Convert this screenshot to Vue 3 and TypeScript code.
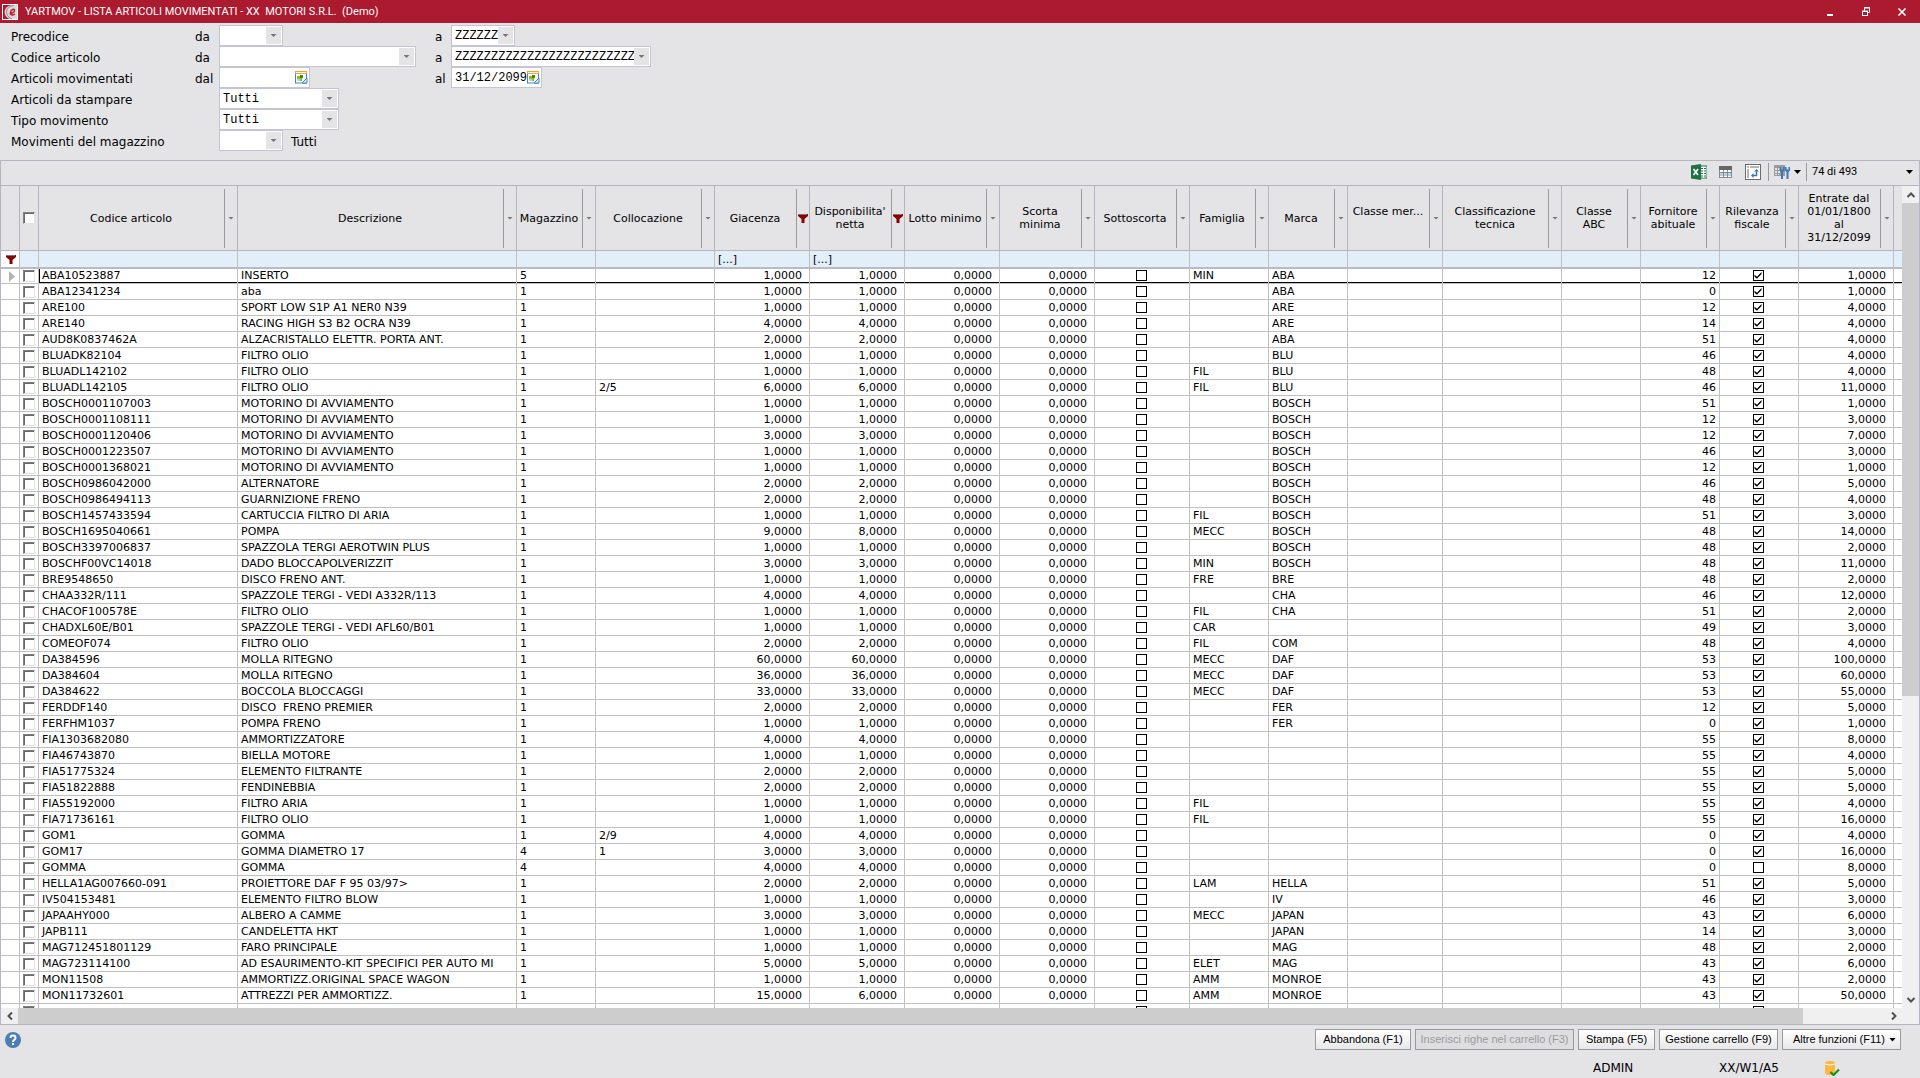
<script setup lang="ts">
import { ref } from 'vue'

interface Column {
  key: string
  title: string
  width: number
  align?: 'left' | 'right' | 'center'
  filtered?: boolean
}

interface Article {
  code: string
  desc: string
  mag: string
  coll: string
  giac: string
  disp: string
  fam: string
  marca: string
  forn: string
  fiscal: boolean
  entrate: string
}

const columns: Column[] = [
  { key: 'code', title: 'Codice articolo', width: 199 },
  { key: 'desc', title: 'Descrizione', width: 279 },
  { key: 'mag', title: 'Magazzino', width: 79 },
  { key: 'coll', title: 'Collocazione', width: 119 },
  { key: 'giac', title: 'Giacenza', width: 95, align: 'right', filtered: true },
  { key: 'disp', title: "Disponibilita'\nnetta", width: 95, align: 'right', filtered: true },
  { key: 'lotto', title: 'Lotto minimo', width: 95, align: 'right' },
  { key: 'scorta', title: 'Scorta\nminima', width: 95, align: 'right' },
  { key: 'sotto', title: 'Sottoscorta', width: 95, align: 'center' },
  { key: 'fam', title: 'Famiglia', width: 79 },
  { key: 'marca', title: 'Marca', width: 79 },
  { key: 'merc', title: 'Classe mer...\n\u00a0', width: 95 },
  { key: 'tecnica', title: 'Classificazione\ntecnica', width: 119 },
  { key: 'abc', title: 'Classe\nABC', width: 79 },
  { key: 'forn', title: 'Fornitore\nabituale', width: 79, align: 'right' },
  { key: 'fiscal', title: 'Rilevanza\nfiscale', width: 79, align: 'center' },
  { key: 'entrate', title: 'Entrate dal\n01/01/1800\nal\n31/12/2099', width: 95, align: 'right' },
]

// code | description | warehouse | location | stock | available | family | brand | supplier | received
const source = `ABA10523887|INSERTO|5||1|1|MIN|ABA|12|1
ABA12341234|aba|1||1|1||ABA|0|1
ARE100|SPORT LOW S1P A1 NER0 N39|1||1|1||ARE|12|4
ARE140|RACING HIGH S3 B2 OCRA N39|1||4|4||ARE|14|4
AUD8K0837462A|ALZACRISTALLO ELETTR. PORTA ANT.|1||2|2||ABA|51|4
BLUADK82104|FILTRO OLIO|1||1|1||BLU|46|4
BLUADL142102|FILTRO OLIO|1||1|1|FIL|BLU|48|4
BLUADL142105|FILTRO OLIO|1|2/5|6|6|FIL|BLU|46|11
BOSCH0001107003|MOTORINO DI AVVIAMENTO|1||1|1||BOSCH|51|1
BOSCH0001108111|MOTORINO DI AVVIAMENTO|1||1|1||BOSCH|12|3
BOSCH0001120406|MOTORINO DI AVVIAMENTO|1||3|3||BOSCH|12|7
BOSCH0001223507|MOTORINO DI AVVIAMENTO|1||1|1||BOSCH|46|3
BOSCH0001368021|MOTORINO DI AVVIAMENTO|1||1|1||BOSCH|12|1
BOSCH0986042000|ALTERNATORE|1||2|2||BOSCH|46|5
BOSCH0986494113|GUARNIZIONE FRENO|1||2|2||BOSCH|48|4
BOSCH1457433594|CARTUCCIA FILTRO DI ARIA|1||1|1|FIL|BOSCH|51|3
BOSCH1695040661|POMPA|1||9|8|MECC|BOSCH|48|14
BOSCH3397006837|SPAZZOLA TERGI AEROTWIN PLUS|1||1|1||BOSCH|48|2
BOSCHF00VC14018|DADO BLOCCAPOLVERIZZIT|1||3|3|MIN|BOSCH|48|11
BRE9548650|DISCO FRENO ANT.|1||1|1|FRE|BRE|48|2
CHAA332R/111|SPAZZOLE TERGI - VEDI A332R/113|1||4|4||CHA|46|12
CHACOF100578E|FILTRO OLIO|1||1|1|FIL|CHA|51|2
CHADXL60E/B01|SPAZZOLE TERGI - VEDI AFL60/B01|1||1|1|CAR||49|3
COMEOF074|FILTRO OLIO|1||2|2|FIL|COM|48|4
DA384596|MOLLA RITEGNO|1||60|60|MECC|DAF|53|100
DA384604|MOLLA RITEGNO|1||36|36|MECC|DAF|53|60
DA384622|BOCCOLA BLOCCAGGI|1||33|33|MECC|DAF|53|55
FERDDF140|DISCO  FRENO PREMIER|1||2|2||FER|12|5
FERFHM1037|POMPA FRENO|1||1|1||FER|0|1
FIA1303682080|AMMORTIZZATORE|1||4|4|||55|8
FIA46743870|BIELLA MOTORE|1||1|1|||55|4
FIA51775324|ELEMENTO FILTRANTE|1||2|2|||55|5
FIA51822888|FENDINEBBIA|1||2|2|||55|5
FIA55192000|FILTRO ARIA|1||1|1|FIL||55|4
FIA71736161|FILTRO OLIO|1||1|1|FIL||55|16
GOM1|GOMMA|1|2/9|4|4|||0|4
GOM17|GOMMA DIAMETRO 17|4|1|3|3|||0|16
GOMMA|GOMMA|4||4|4|||0|8
HELLA1AG007660-091|PROIETTORE DAF F 95 03/97>|1||2|2|LAM|HELLA|51|5
IV504153481|ELEMENTO FILTRO BLOW|1||1|1||IV|46|3
JAPAAHY000|ALBERO A CAMME|1||3|3|MECC|JAPAN|43|6
JAPB111|CANDELETTA HKT|1||1|1||JAPAN|14|3
MAG712451801129|FARO PRINCIPALE|1||1|1||MAG|48|2
MAG723114100|AD ESAURIMENTO-KIT SPECIFICI PER AUTO MI|1||5|5|ELET|MAG|43|6
MON11508|AMMORTIZZ.ORIGINAL SPACE WAGON|1||1|1|AMM|MONROE|43|2
MON11732601|ATTREZZI PER AMMORTIZZ.|1||15|6|AMM|MONROE|43|50`

const qty = (n: string) => `${n},0000`

const articles: Article[] = source.split('\n').map((line) => {
  const [code, desc, mag, coll, giac, disp, fam, marca, forn, entrate] = line.split('|')
  return {
    code, desc, mag, coll, fam, marca, forn,
    giac: qty(giac),
    disp: qty(disp),
    entrate: qty(entrate),
    fiscal: code !== 'GOMMA',
  }
})

const selected = ref<string[]>([])
const precodeFrom = ref('')
const precodeTo = ref('ZZZZZZ')
const codeFrom = ref('')
const codeTo = ref('Z'.repeat(25))
const dateFrom = ref('')
const dateTo = ref('31/12/2099')
const warehouse = ref('')
</script>

<template>
  <div class="window">
    <header class="titlebar">
      <svg class="logo" viewBox="0 0 16 16" aria-hidden="true">
        <rect width="16" height="16" fill="#fff" />
        <rect x="1" y="1" width="14" height="14" fill="#c4122b" />
        <path d="M15 1H10C4 2 1.500 6 3 10.500C4 13 6 14.500 8 15H15z" fill="#d9d9d9" />
        <path d="M12 1.500C6 2 3.500 6 5 10.500C6 12.500 7.500 14 10 15" fill="none" stroke="#8c8c8c" />
        <path d="M7.500 9.500C10 10 13 8 12.500 6C12 4.500 8.500 5.500 8.500 8.500C8.500 11.500 11 11.500 13 10" fill="none" stroke="#c4122b" stroke-width="1.500" />
      </svg>
      <h1>YARTMOV - LISTA ARTICOLI MOVIMENTATI - XX&nbsp; MOTORI S.R.L.&nbsp; (Demo)</h1>
      <div class="window-buttons">
        <button type="button" aria-label="Riduci a icona">
          <svg viewBox="0 0 12 12"><rect x="3" y="8" width="6" height="2" fill="#fff" /></svg>
        </button>
        <button type="button" aria-label="Ripristina">
          <svg viewBox="0 0 12 12" fill="none" stroke="#fff">
            <path d="M4.500 4.500V1.500H9.500V6.500H7" /><path d="M4 2H10" /><rect x="2.500" y="5.500" width="5" height="4" /><path d="M2 5H8" />
          </svg>
        </button>
        <button type="button" aria-label="Chiudi">
          <svg viewBox="0 0 12 12"><path d="M2.500 2.500L9.500 9.500M9.500 2.500L2.500 9.500" stroke="#fff" stroke-width="1.600" /></svg>
        </button>
      </div>
    </header>

    <form class="filters" @submit.prevent>
      <span class="name">Precodice</span>
      <label for="pre-from">da</label>
      <div class="field w-short"><input id="pre-from" v-model="precodeFrom" /><button type="button" class="drop" aria-label="Apri elenco"><i class="tri"></i></button></div>
      <label for="pre-to" class="to">a</label>
      <div class="field w-short"><input id="pre-to" v-model="precodeTo" /><button type="button" class="drop" aria-label="Apri elenco"><i class="tri"></i></button></div>

      <span class="name">Codice articolo</span>
      <label for="cod-from">da</label>
      <div class="field w-long"><input id="cod-from" v-model="codeFrom" /><button type="button" class="drop" aria-label="Apri elenco"><i class="tri"></i></button></div>
      <label for="cod-to" class="to">a</label>
      <div class="field w-full"><input id="cod-to" v-model="codeTo" /><button type="button" class="drop" aria-label="Apri elenco"><i class="tri"></i></button></div>

      <span class="name">Articoli movimentati</span>
      <label for="date-from">dal</label>
      <div class="field w-date">
        <input id="date-from" v-model="dateFrom" />
        <button type="button" class="calendar" aria-label="Scegli data">
          <svg viewBox="0 0 13 13"><rect x=".5" y="1" width="11" height="11" fill="#fff" stroke="#3f87bd" /><path d="M0 1.500H12" stroke="#ff9d2e" stroke-width="3" /><path d="M1 1.500H11" stroke="#fff" /><path d="M2 5h5v5H2z" fill="#8cbf1f" /><path d="M5 4h3v3H5z" fill="#3c8a12" /><path d="M2 8h3v2H2z" fill="#b9d6ee" /><path d="M7 12L12 7V12z" fill="#dbe9f5" stroke="#3f87bd" /></svg>
        </button>
      </div>
      <label for="date-to" class="to">al</label>
      <div class="field w-date">
        <input id="date-to" v-model="dateTo" />
        <button type="button" class="calendar" aria-label="Scegli data">
          <svg viewBox="0 0 13 13"><rect x=".5" y="1" width="11" height="11" fill="#fff" stroke="#3f87bd" /><path d="M0 1.500H12" stroke="#ff9d2e" stroke-width="3" /><path d="M1 1.500H11" stroke="#fff" /><path d="M2 5h5v5H2z" fill="#8cbf1f" /><path d="M5 4h3v3H5z" fill="#3c8a12" /><path d="M2 8h3v2H2z" fill="#b9d6ee" /><path d="M7 12L12 7V12z" fill="#dbe9f5" stroke="#3f87bd" /></svg>
        </button>
      </div>

      <label for="print" class="name wide">Articoli da stampare</label>
      <div class="field w-select last"><select id="print"><option>Tutti</option></select><span class="drop"><i class="tri"></i></span></div>

      <label for="kind" class="name wide">Tipo movimento</label>
      <div class="field w-select last"><select id="kind"><option>Tutti</option></select><span class="drop"><i class="tri"></i></span></div>

      <label for="store" class="name wide">Movimenti del magazzino</label>
      <div class="last store">
        <div class="field w-short"><input id="store" v-model="warehouse" /><button type="button" class="drop" aria-label="Apri elenco"><i class="tri"></i></button></div>
        <span>Tutti</span>
      </div>
    </form>

    <main class="grid-panel">
      <div class="toolbar">
        <button type="button" class="tool" aria-label="Esporta in Excel">
          <svg viewBox="0 0 16 16"><rect x="9" y="2" width="7" height="12" fill="#fff" stroke="#1e7145" /><path d="M10 4.500h5M10 7h5M10 9.500h5M10 12h5" stroke="#1e7145" /><path d="M12.500 3v11" stroke="#fff" /><path d="M0 1.500L10 0V16L0 14.500z" fill="#1e7145" /><path d="M2.500 5L7 11M7 5L2.500 11" stroke="#fff" stroke-width="1.600" /></svg>
        </button>
        <button type="button" class="tool" aria-label="Vista griglia">
          <svg viewBox="0 0 16 16"><rect x="1" y="2" width="13" height="12" fill="#8a8a8a" /><rect x="1" y="2" width="13" height="4" fill="#666" /><path d="M2 6h3v2H2zM6 6h3v2H6zM10 6h3v2h-3zM2 11.500h3v1.500H2zM6 11.500h3v1.500H6zM10 11.500h3v1.500h-3z" fill="#fff" /><path d="M2 9h3v2H2zM6 9h3v2H6zM10 9h3v2h-3z" fill="#a9d5f0" /></svg>
        </button>
        <button type="button" class="tool end" aria-label="Vista pivot">
          <svg viewBox="0 0 16 16"><rect x=".5" y=".5" width="15" height="15" fill="#fff" stroke="#6b6b6b" /><path d="M2 2h2v2H2zM5 2h9v2H5zM2 5h2v9H2z" fill="#b5b5b5" /><path d="M8 11.500H11.500V7" fill="none" stroke="#3a78b5" stroke-width="1.500" /><path d="M9 7.500L11.500 5L14 7.500zM8.500 9V14L6 11.500z" fill="#3a78b5" /></svg>
        </button>
        <span class="rule"></span>
        <button type="button" class="tool menu" aria-label="Strumenti">
          <svg viewBox="0 0 16 16"><path d="M0 1h11v11H0z" fill="#9a9a9a" /><path d="M1 4h2v2H1zM4 4h2v2H4zM1 7h2v2H1zM4 7h2v2H4zM1 10h2v1H1zM4 10h1v1H4z" fill="#e4e4e6" /><path d="M5.500 3v3.500L7 8v7h2V8l1.500-1.500V3H9v2.500H7V3zM11 3v3.500L12.500 8v7h2V8L16 6.500V3h-1.500v2.500h-2V3z" fill="#3a78b5" /></svg>
          <i class="tri dark"></i>
        </button>
        <span class="rule"></span>
        <button type="button" class="count"><span>74 di 493</span><i class="tri dark"></i></button>
      </div>

      <div class="sheet">
        <div class="viewport">
          <table>
            <colgroup>
              <col class="c-mark" /><col class="c-mark" />
              <col v-for="c in columns" :key="c.key" :style="{ width: c.width + 'px' }" />
              <col />
            </colgroup>
            <thead>
              <tr class="titles">
                <th></th>
                <th><input type="checkbox" class="tick" aria-label="Seleziona tutti" /></th>
                <th v-for="c in columns" :key="c.key" scope="col">
                  <div class="head">
                    <span class="caption">{{ c.title }}</span>
                    <svg v-if="c.filtered" class="funnel" viewBox="0 0 10 9"><path d="M0 0H10V2L6.500 5V9H3.500V5L0 2z" fill="#8b0000" /><path d="M0 .5H9" stroke="#777" /></svg>
                    <i v-else class="tri small"></i>
                  </div>
                </th>
                <th></th>
              </tr>
              <tr class="filter-row">
                <th class="mark"><svg class="funnel" viewBox="0 0 10 9"><path d="M0 0H10V2L6.500 5V9H3.500V5L0 2z" fill="#8b0000" /><path d="M0 .5H9" stroke="#777" /></svg></th>
                <td></td>
                <td v-for="c in columns" :key="c.key">{{ c.filtered ? '[...]' : '' }}</td>
                <td></td>
              </tr>
            </thead>
            <tbody>
              <tr v-for="(a, i) in articles" :key="a.code" :class="{ current: i === 0 }">
                <td class="mark"><i v-if="i === 0" class="pointer"></i></td>
                <td class="mark"><input v-model="selected" :value="a.code" type="checkbox" class="tick" :aria-label="'Seleziona ' + a.code" /></td>
                <td>{{ a.code }}</td>
                <td class="pre">{{ a.desc }}</td>
                <td>{{ a.mag }}</td>
                <td>{{ a.coll }}</td>
                <td class="num">{{ a.giac }}</td>
                <td class="num">{{ a.disp }}</td>
                <td class="num">0,0000</td>
                <td class="num">0,0000</td>
                <td class="mid"><input type="checkbox" class="flag" :aria-label="'Sottoscorta ' + a.code" /></td>
                <td>{{ a.fam }}</td>
                <td>{{ a.marca }}</td>
                <td></td>
                <td></td>
                <td></td>
                <td class="num tight">{{ a.forn }}</td>
                <td class="mid"><input type="checkbox" class="flag" :checked="a.fiscal" :aria-label="'Rilevanza fiscale ' + a.code" /></td>
                <td class="num">{{ a.entrate }}</td>
                <td></td>
              </tr>
              <tr>
                <td class="mark"></td>
                <td class="mark"><input type="checkbox" class="tick" aria-label="Seleziona riga" /></td>
                <td v-for="c in columns" :key="c.key" :class="{ mid: c.align === 'center' }">
                  <input v-if="c.align === 'center'" type="checkbox" class="flag" :aria-label="c.title" />
                </td>
                <td></td>
              </tr>
            </tbody>
          </table>
        </div>
        <div class="bar vertical">
          <button type="button" aria-label="Scorri su"><svg viewBox="0 0 10 10"><path d="M1.500 7L5 3.500L8.500 7" /></svg></button>
          <div class="track"><div class="thumb"></div></div>
          <button type="button" aria-label="Scorri giù"><svg viewBox="0 0 10 10"><path d="M1.500 3L5 6.500L8.500 3" /></svg></button>
        </div>
        <div class="bar horizontal">
          <button type="button" aria-label="Scorri a sinistra"><svg viewBox="0 0 10 10"><path d="M7 1.500L3.500 5L7 8.500" /></svg></button>
          <div class="track"><div class="thumb"></div></div>
          <button type="button" aria-label="Scorri a destra"><svg viewBox="0 0 10 10"><path d="M3 1.500L6.500 5L3 8.500" /></svg></button>
        </div>
        <div class="corner"></div>
      </div>
    </main>

    <footer>
      <div class="actions">
        <button type="button" class="help" aria-label="Aiuto">
          <svg viewBox="0 0 16 16"><circle cx="8" cy="8" r="8" fill="#4a7fb5" /><path d="M5.500 6C5.500 2.800 10.500 2.800 10.500 6C10.500 7.700 8 8 8 10" fill="none" stroke="#fff" stroke-width="2" /><rect x="7" y="11" width="2" height="2" fill="#fff" /></svg>
        </button>
        <button type="button" class="action">Abbandona (F1)</button>
        <button type="button" class="action long" disabled>Inserisci righe nel carrello (F3)</button>
        <button type="button" class="action short">Stampa (F5)</button>
        <button type="button" class="action medium">Gestione carrello (F9)</button>
        <button type="button" class="action medium more">Altre funzioni (F11) <i class="tri dark"></i></button>
      </div>
      <div class="status">
        <span class="user">ADMIN</span>
        <span class="site">XX/W1/A5</span>
        <svg viewBox="0 0 15 15" aria-hidden="true"><path d="M0 2Q0 0 5 0T10 2V12Q10 14 5 14T0 12z" fill="#fdb642" /><path d="M0 3Q5 5 10 3" fill="none" stroke="#fff" /><path d="M5.500 11L8.500 14L14 8.500" fill="none" stroke="#149414" stroke-width="2.200" /></svg>
      </div>
    </footer>
  </div>
</template>

<style>
body {
  margin: 0;
  background: #e4e4e6;
}
</style>

<style scoped>
.window {
  display: flex;
  flex-direction: column;
  height: 100vh;
  background: #e4e4e6;
  color: #000;
  font: 11px/16px "DejaVu Sans", Verdana, sans-serif;
}

.window * {
  box-sizing: border-box;
}

button {
  padding: 0;
  border: 0;
  background: none;
  color: inherit;
  font: inherit;
}

svg {
  display: block;
}

/* Title bar */
.titlebar {
  display: flex;
  flex: none;
  align-items: center;
  height: 23px;
  padding-left: 2px;
  background: #ab1a2e;
  color: #fff;
}

.logo {
  width: 16px;
  height: 16px;
}

h1 {
  flex: 1;
  margin: 0 0 0 7px;
  font: 11px/22px Roboto, "Segoe UI", sans-serif;
}

.window-buttons {
  display: flex;
}

.window-buttons button {
  display: flex;
  justify-content: center;
  width: 36px;
}

.window-buttons svg {
  width: 12px;
  height: 12px;
}

/* Filter form */
.filters {
  display: grid;
  flex: none;
  grid-template-columns: 184px 24px 196px 36px 200px;
  grid-auto-rows: 21px;
  align-content: start;
  align-items: center;
  height: 137px;
  padding: 2px 0 0 11px;
  font-size: 12px;
}

.name,
.filters label,
.store span {
  padding-top: 2px;
}

.filters .to {
  padding-left: 20px;
}

.name.wide {
  grid-column: span 2;
}

.last {
  grid-column: span 3;
}

.store {
  display: flex;
  align-items: center;
  gap: 8px;
}

.field {
  display: flex;
  height: 21px;
  padding: 1px;
  border: 1px solid #c3c4d4;
  background: #fff;
}

.w-short { width: 64px; }
.w-long { width: 197px; }
.w-full { width: 200px; }
.w-date { width: 91px; }
.w-select { width: 120px; }

.field input,
.field select {
  flex: 1;
  min-width: 0;
  margin: 0;
  padding: 2px 0 0 2px;
  border: 0;
  outline: 0;
  background: #fff;
  appearance: none;
  color: #000;
  font: 12px/15px "Liberation Mono", "Courier New", monospace;
}

.drop {
  display: flex;
  flex: none;
  align-items: center;
  justify-content: center;
  width: 15px;
  background: #e4e4e6;
}

.calendar svg {
  width: 13px;
  height: 13px;
}

.tri {
  width: 6px;
  height: 3px;
  background: #777;
  clip-path: polygon(0 0, 100% 0, 50% 100%);
}

.tri.dark {
  width: 7px;
  height: 4px;
  background: #000;
}

/* Grid panel */
.grid-panel {
  display: flex;
  flex: 1;
  flex-direction: column;
  min-height: 0;
  border: 1px solid #b4b6c2;
}

.toolbar {
  display: flex;
  flex: none;
  align-items: center;
  justify-content: flex-end;
  height: 25px;
  padding-bottom: 2px;
  border-bottom: 1px solid #b4b6c2;
}

.tool {
  display: flex;
  align-items: center;
  width: 27px;
}

.tool svg {
  width: 16px;
  height: 16px;
}

.tool.end {
  width: 23px;
}

.tool.menu {
  gap: 4px;
  width: 32px;
}

.rule {
  width: 1px;
  height: 18px;
  margin-right: 5px;
  background: #9a9a9e;
}

.count {
  display: flex;
  align-items: center;
  justify-content: space-between;
  width: 107px;
  padding-right: 6px;
  font: 11px/16px Roboto, "Segoe UI", sans-serif;
}

.sheet {
  display: grid;
  flex: 1;
  grid-template-rows: minmax(0, 1fr) 16px;
  grid-template-columns: minmax(0, 1fr) 17px;
  min-height: 0;
}

.viewport {
  min-height: 0;
  overflow: hidden;
  background: #fff;
}

table {
  width: 100%;
  border-spacing: 0;
  table-layout: fixed;
}

.c-mark {
  width: 19px;
}

th,
td {
  height: 16px;
  padding: 0 3px;
  overflow: hidden;
  border-right: 1px solid #c0c0c0;
  border-bottom: 1px solid #c0c0c0;
  font-weight: normal;
  line-height: 15px;
  text-align: left;
  vertical-align: top;
  white-space: nowrap;
}

th:last-child,
td:last-child {
  border-right: 0;
}

.pre {
  white-space: pre;
}

.titles th {
  height: 65px;
  padding: 0;
  border-color: #b4b6c2;
  background: #e4e4e6;
  vertical-align: middle;
}

.head {
  display: flex;
  align-items: center;
  height: 64px;
}

.caption {
  display: flex;
  flex: 1;
  align-items: center;
  justify-content: center;
  height: 59px;
  padding-right: 1px;
  border-right: 1px solid #9a9a9e;
  line-height: 13px;
  text-align: center;
  white-space: pre;
}

.tri.small {
  flex: none;
  margin: 0 3px;
}

.funnel {
  flex: none;
  width: 10px;
  height: 9px;
  margin: 0 1px;
}

.filter-row td,
.filter-row th {
  height: 18px;
  border-bottom: 2px solid #b8bac6;
  background: #e2eef8;
}

.filter-row td {
  padding-top: 1px;
}

.filter-row .mark {
  padding: 4px 0 0 4px;
  background: #fff;
}

.mark {
  padding: 2px 0 0 3px;
}

.titles .tick {
  margin: 0 3px;
}

.tick {
  display: block;
  width: 12px;
  height: 12px;
  margin: 0;
  border: 1px solid;
  border-color: #808080 #e3e3e3 #e3e3e3 #808080;
  background: #fff;
  box-shadow: inset 1px 1px #696969;
  appearance: none;
}

.num {
  padding-right: 7px;
  text-align: right;
}

.num.tight {
  padding-right: 3px;
}

.mid {
  padding: 2px 2px 0 0;
}

.flag {
  display: block;
  width: 11px;
  height: 11px;
  margin: 0 auto;
  border: 1px solid #000;
  background: #fff;
  appearance: none;
}

.flag:checked::before {
  display: block;
  width: 9px;
  height: 9px;
  background: #000;
  clip-path: polygon(11% 42%, 39% 64%, 89% 11%, 89% 32%, 39% 87%, 11% 64%);
  content: "";
}

.current td {
  height: 15px;
  box-shadow: inset 0 -1px #000;
  line-height: 13px;
}

.current td.mark {
  padding-top: 1px;
  box-shadow: none;
}

.current td.mid {
  padding-top: 1px;
}

.current td:nth-child(3) {
  box-shadow: inset 1px -1px #000;
}

.pointer {
  display: block;
  width: 6px;
  height: 11px;
  margin: 1px 0 0 5px;
  background: #b4b4b4;
  clip-path: polygon(0 0, 100% 50%, 0 100%);
}

/* Scroll bars */
.bar {
  display: flex;
  background: #f0f0f0;
}

.bar button {
  display: flex;
  flex: none;
  align-items: center;
  justify-content: center;
  width: 17px;
  height: 17px;
}

.bar svg {
  width: 10px;
  height: 10px;
  fill: none;
  stroke: #505050;
  stroke-width: 2px;
}

.vertical {
  flex-direction: column;
}

.horizontal button {
  height: 16px;
}

.track {
  display: flex;
  flex: 1;
}

.vertical .track {
  flex-direction: column;
}

.thumb {
  background: #cdcdcd;
}

.vertical .thumb {
  height: 62.5%;
}

.horizontal .thumb {
  width: 95.6%;
}

.corner {
  background: #f0f0f0;
}

/* Footer */
footer {
  flex: none;
  height: 53px;
}

.actions {
  display: flex;
  gap: 4px;
  align-items: center;
  padding: 4px 19px 0 5px;
}

.help {
  margin-right: auto;
}

.help svg {
  width: 16px;
  height: 16px;
}

.action {
  min-width: 96px;
  height: 21px;
  padding: 0 4px;
  border: 1px solid #9a9a9e;
  background: linear-gradient(#fff, #e8e8ea);
  font: 11px/19px "Liberation Sans", Arial, sans-serif;
}

.action:disabled {
  background: #dedee0;
  color: #9a9a9e;
}

.action.short {
  min-width: 77px;
}

.action.medium {
  min-width: 119px;
}

.action.long {
  min-width: 159px;
}

.more {
  display: flex;
  gap: 4px;
  align-items: center;
  justify-content: flex-end;
}

.status {
  display: flex;
  align-items: center;
  justify-content: flex-end;
  height: 28px;
  padding: 8px 80px 0 0;
  font-size: 12px;
}

.user {
  width: 126px;
}

.site {
  width: 106px;
}

.status svg {
  width: 15px;
  height: 15px;
}
</style>
